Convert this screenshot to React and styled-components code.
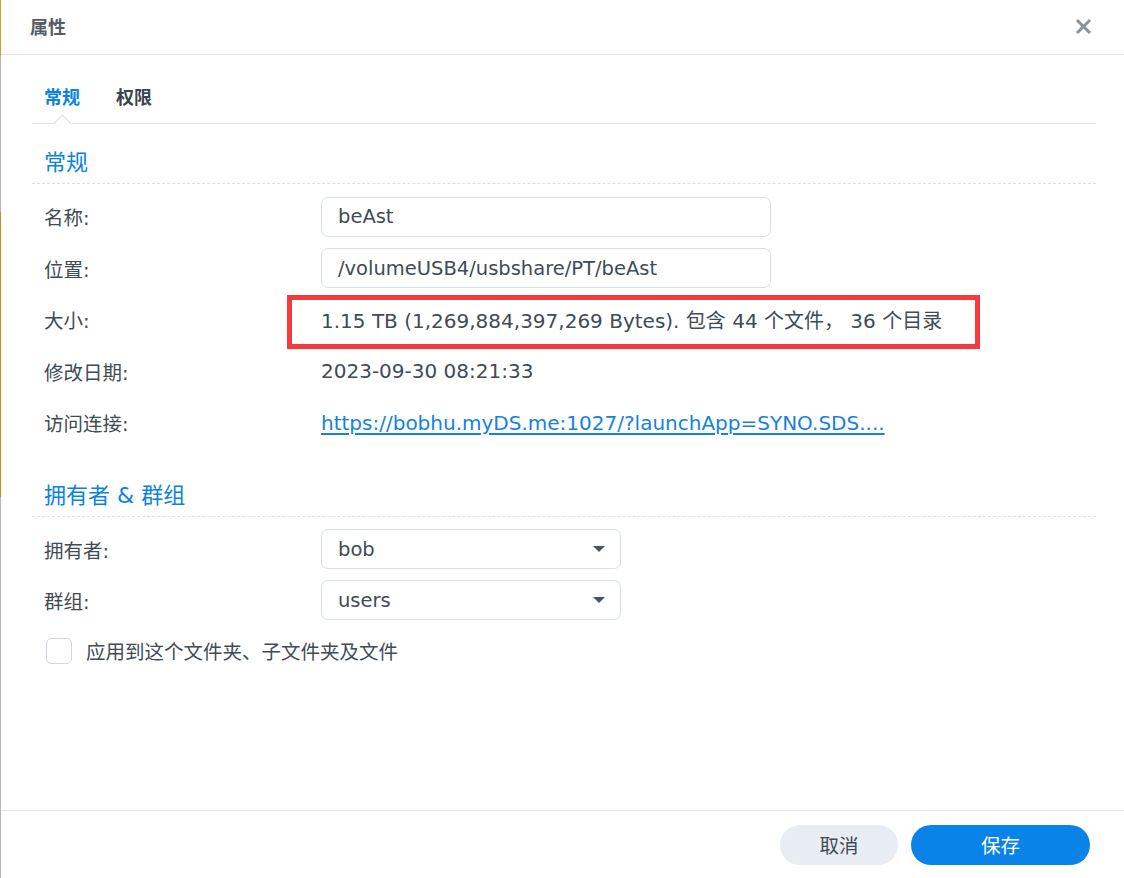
import React from "react";
import styled, { createGlobalStyle } from "styled-components";

const GlobalStyle = createGlobalStyle`
  html, body {
    margin: 0;
    padding: 0;
    background: #ffffff;
  }
  body {
    font-family: "DejaVu Sans", "Noto Sans CJK SC", sans-serif;
    color: #414b55;
  }
  * { box-sizing: border-box; }
`;

const Page = styled.div`
  display: flex;
  width: 1124px;
  height: 878px;
  overflow: hidden;
`;

/* sliver of the desktop window behind the dialog */
const Edge = styled.div`
  width: 1px;
  flex: none;
  background: linear-gradient(
    to bottom,
    #c9a12e 0px,
    #c9a12e 56px,
    #b5b7ba 56px,
    #b5b7ba 212px,
    #c29426 212px,
    #c29426 497px,
    #b5b7ba 497px,
    #b5b7ba 100%
  );
`;

const Dialog = styled.div`
  flex: 1;
  display: flex;
  flex-direction: column;
  background: #fff;
`;

const Header = styled.div`
  height: 55px;
  flex: none;
  display: flex;
  align-items: center;
  justify-content: space-between;
  padding: 0 29px 2px 29px;
  border-bottom: 1px solid #e1e7ed;
`;

const Title = styled.div`
  font-size: 18px;
  font-weight: bold;
  color: #555c64;
`;

const CloseButton = styled.button`
  width: 24px;
  height: 24px;
  padding: 0;
  border: 0;
  background: none;
  display: flex;
  align-items: center;
  justify-content: center;
  cursor: pointer;
`;

const Body = styled.div`
  flex: 1;
  padding: 0 28px 0 31px;
  display: flex;
  flex-direction: column;
`;

const TabBar = styled.div`
  height: 69px;
  flex: none;
  display: flex;
  gap: 12px;
  border-bottom: 1px solid #d9e0e8;
`;

const Tab = styled.div`
  position: relative;
  display: flex;
  align-items: center;
  padding: 13px 12px 0;
  font-size: 18px;
  font-weight: bold;
  color: ${(p) => (p.$active ? "#0a83e0" : "#3b434b")};
`;

const Notch = styled.span`
  position: absolute;
  left: 50%;
  bottom: -7px;
  width: 13px;
  height: 13px;
  margin-left: -6px;
  background: #fff;
  border-left: 1px solid #d9e0e8;
  border-top: 1px solid #d9e0e8;
  transform: rotate(45deg);
`;

const Section = styled.section`
  display: flex;
  flex-direction: column;
  margin-top: ${(p) => p.$top}px;
`;

const SectionTitle = styled.div`
  font-size: 22px;
  color: #0a83e0;
  padding: 0 12px 5px;
  line-height: 30px;
  border-bottom: 1px dashed #d9e0e8;
`;

const Rows = styled.div`
  display: flex;
  flex-direction: column;
  gap: ${(p) => p.$gap}px;
  padding: 12.5px 0 0 12px;
`;

const Row = styled.div`
  display: grid;
  grid-template-columns: 277px 1fr;
  align-items: center;
  min-height: 40px;
`;

const Label = styled.div`
  font-size: 19.5px;
`;

const Value = styled.div`
  position: relative;
  font-size: 20px;
  white-space: nowrap;
`;

const TextBox = styled.div`
  width: ${(p) => p.$w}px;
  height: 40px;
  border: 1px solid #d6dfe8;
  border-radius: 7px;
  padding: 0 16px;
  display: flex;
  align-items: center;
  justify-content: space-between;
  font-size: 19.5px;
`;

const Caret = styled.span`
  width: 0;
  height: 0;
  margin-right: -1px;
  border-left: 6.5px solid transparent;
  border-right: 6.5px solid transparent;
  border-top: 6.5px solid #4b5560;
`;

const Link = styled.a`
  color: #1582dc;
  text-decoration: underline;
  text-underline-offset: 3px;
`;

const Highlight = styled.span`
  position: absolute;
  left: -34px;
  top: 50%;
  margin-top: -25px;
  width: 693px;
  height: 54px;
  border: 5px solid #f43a3a;
  pointer-events: none;
`;

const CheckRow = styled.label`
  display: flex;
  align-items: center;
  gap: 14px;
  margin-top: 16px;
  padding-left: 14px;
  font-size: 19.5px;
`;

const CheckBox = styled.span`
  width: 26px;
  height: 26px;
  border: 1px solid #cfd8e2;
  border-radius: 5px;
  background: #fff;
`;

const Footer = styled.div`
  height: 68px;
  flex: none;
  border-top: 1px solid #e1e7ed;
  display: flex;
  align-items: center;
  justify-content: flex-end;
  gap: 13px;
  padding: 0 34px 0 0;
`;

const Button = styled.button`
  width: ${(p) => p.$w}px;
  height: 40px;
  border: 0;
  border-radius: 20px;
  font-family: inherit;
  font-size: 19.5px;
  background: ${(p) => (p.$primary ? "#0a83e8" : "#e8edf3")};
  color: ${(p) => (p.$primary ? "#ffffff" : "#414b55")};
  cursor: pointer;
`;

const CloseIcon = () => (
  <svg width="17" height="17" viewBox="0 0 17 17">
    <path
      d="M2 2 L15 15 M15 2 L2 15"
      stroke="#8b9299"
      strokeWidth="3"
      strokeLinecap="butt"
    />
  </svg>
);

const generalRows = [
  { label: "名称:", box: "beAst" },
  { label: "位置:", box: "/volumeUSB4/usbshare/PT/beAst" },
  {
    label: "大小:",
    text: "1.15 TB (1,269,884,397,269 Bytes). 包含 44 个文件， 36 个目录",
    marked: true,
  },
  { label: "修改日期:", text: "2023-09-30 08:21:33" },
  {
    label: "访问连接:",
    link: "https://bobhu.myDS.me:1027/?launchApp=SYNO.SDS....",
  },
];

const ownerRows = [
  { label: "拥有者:", select: "bob" },
  { label: "群组:", select: "users" },
];

export default function App() {
  return (
    <>
      <GlobalStyle />
      <Page>
        <Edge />
        <Dialog>
          <Header>
            <Title>属性</Title>
            <CloseButton aria-label="关闭">
              <CloseIcon />
            </CloseButton>
          </Header>

          <Body>
            <TabBar>
              <Tab $active>
                常规
                <Notch />
              </Tab>
              <Tab>权限</Tab>
            </TabBar>

            <Section $top={24}>
              <SectionTitle>常规</SectionTitle>
              <Rows $gap={11.5}>
                {generalRows.map((r) => (
                  <Row key={r.label}>
                    <Label>{r.label}</Label>
                    {r.box && <TextBox $w={450}>{r.box}</TextBox>}
                    {r.text && (
                      <Value>
                        {r.marked && <Highlight />}
                        {r.text}
                      </Value>
                    )}
                    {r.link && (
                      <Value>
                        <Link href="#">{r.link}</Link>
                      </Value>
                    )}
                  </Row>
                ))}
              </Rows>
            </Section>

            <Section $top={38}>
              <SectionTitle>拥有者 &amp; 群组</SectionTitle>
              <Rows $gap={11}>
                {ownerRows.map((r) => (
                  <Row key={r.label}>
                    <Label>{r.label}</Label>
                    <TextBox $w={300}>
                      {r.select}
                      <Caret />
                    </TextBox>
                  </Row>
                ))}
              </Rows>
              <CheckRow>
                <CheckBox />
                应用到这个文件夹、子文件夹及文件
              </CheckRow>
            </Section>
          </Body>

          <Footer>
            <Button $w={118}>取消</Button>
            <Button $w={179} $primary>
              保存
            </Button>
          </Footer>
        </Dialog>
      </Page>
    </>
  );
}
